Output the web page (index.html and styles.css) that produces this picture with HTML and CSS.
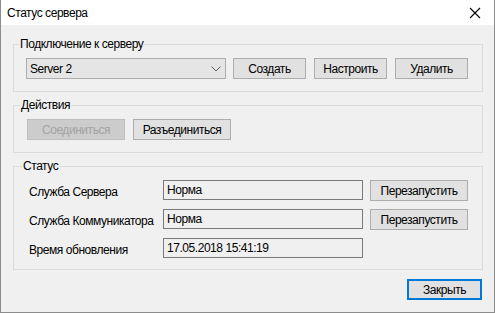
FILE: index.html
```html
<!DOCTYPE html>
<html lang="ru">
  <head>
    <meta charset="UTF-8" />
    <title>Статус сервера</title>
    <link rel="stylesheet" href="styles.css">
  </head>
  <body>
    <div class="window">
      <div class="titlebar">
        <span class="title">Статус сервера</span>
        <svg class="close-x" width="12" height="12" viewBox="0 0 12 12">
          <path d="M1 1 L11 11 M11 1 L1 11" stroke="#000" stroke-width="1.1" fill="none" />
        </svg>
      </div>
      <div class="content">
        <div class="group group-conn">
          <div class="legend">Подключение к серверу</div>
          <div class="row">
            <div class="combo">
              <span>Server 2</span>
              <svg width="10" height="6" viewBox="0 0 10 6">
                <path d="M0.5 0.5 L5 5 L9.5 0.5" stroke="#606060" stroke-width="1" fill="none" />
              </svg>
            </div>
            <button class="btn btn-sm">Создать</button>
            <button class="btn btn-sm">Настроить</button>
            <button class="btn btn-sm">Удалить</button>
          </div>
        </div>

        <div class="group group-actions">
          <div class="legend">Действия</div>
          <div class="row">
            <button class="btn btn-wide" disabled>Соединиться</button>
            <button class="btn btn-wide">Разъединиться</button>
          </div>
        </div>

        <div class="group group-status">
          <div class="legend">Статус</div>
          <div class="status-row">
            <span class="label">Служба Сервера</span>
            <div class="textbox">Норма</div>
            <button class="btn btn-wide">Перезапустить</button>
          </div>
          <div class="status-row">
            <span class="label">Служба Коммуникатора</span>
            <div class="textbox">Норма</div>
            <button class="btn btn-wide">Перезапустить</button>
          </div>
          <div class="status-row">
            <span class="label">Время обновления</span>
            <div class="textbox">17.05.2018 15:41:19</div>
          </div>
        </div>

        <div class="footer">
          <button class="btn btn-close">Закрыть</button>
        </div>
      </div>
    </div>
  </body>
</html>
```

FILE: styles.css
```css
body {
  margin: 0;
  font-family: "Liberation Sans", Arial, sans-serif;
  font-size: 12px;
  letter-spacing: -0.45px;
  color: #000;
  background-color: #f0f0f0;
}
.window {
  width: 495px;
  height: 313px;
  box-sizing: border-box;
  border: 1px solid #8c8c8c;
  border-top: none;
  background-color: #f0f0f0;
  display: flex;
  flex-direction: column;
}
.titlebar {
  height: 25px;
  background-color: #fff;
  display: flex;
  align-items: center;
  justify-content: space-between;
  padding: 0 13px 0 6px;
}
.title {
  font-size: 12px;
}
.content {
  padding: 19px 11px 0 12px;
}
.group {
  border: 1px solid #dcdcdc;
  box-sizing: border-box;
  padding: 13px 0 0 12px;
}
.group-conn {
  height: 48px;
}
.group-actions {
  height: 48px;
  margin-top: 13px;
  padding-left: 13px;
}
.group-status {
  height: 104px;
  margin-top: 13px;
  padding-left: 15px;
}
.legend {
  display: table;
  margin: -21px 0 6px -7px;
  padding: 0 1px;
  line-height: 15px;
  background-color: #f0f0f0;
}
.row {
  display: flex;
  gap: 8px;
}
.combo {
  width: 200px;
  height: 21px;
  box-sizing: border-box;
  border: 1px solid #adadad;
  background-color: #e5e5e5;
  display: flex;
  align-items: center;
  justify-content: space-between;
  padding: 0 4px 0 3px;
  margin-right: -1px;
}
.btn {
  height: 21px;
  box-sizing: border-box;
  border: 1px solid #adadad;
  background-color: #e1e1e1;
  font-family: inherit;
  font-size: 12px;
  letter-spacing: inherit;
  color: #000;
  padding: 0;
}
.btn:disabled {
  background-color: #cccccc;
  border-color: #bfbfbf;
  color: #a3a3a3;
}
.btn-sm {
  width: 73px;
}
.btn-wide {
  width: 98px;
}
.status-row {
  display: flex;
  align-items: center;
  height: 21px;
  margin-bottom: 8px;
}
.label {
  width: 134px;
  padding-top: 2px;
}
.textbox {
  width: 200px;
  height: 20px;
  box-sizing: border-box;
  border: 1px solid #7a7a7a;
  background-color: #f0f0f0;
  padding-left: 3px;
  line-height: 18px;
  align-self: flex-start;
  margin-right: 7px;
}
.footer {
  display: flex;
  justify-content: flex-end;
  margin-top: 9px;
  padding-right: 1px;
}
.btn-close {
  width: 75px;
  height: 21px;
  border: 2px solid #0078d7;
}
```
